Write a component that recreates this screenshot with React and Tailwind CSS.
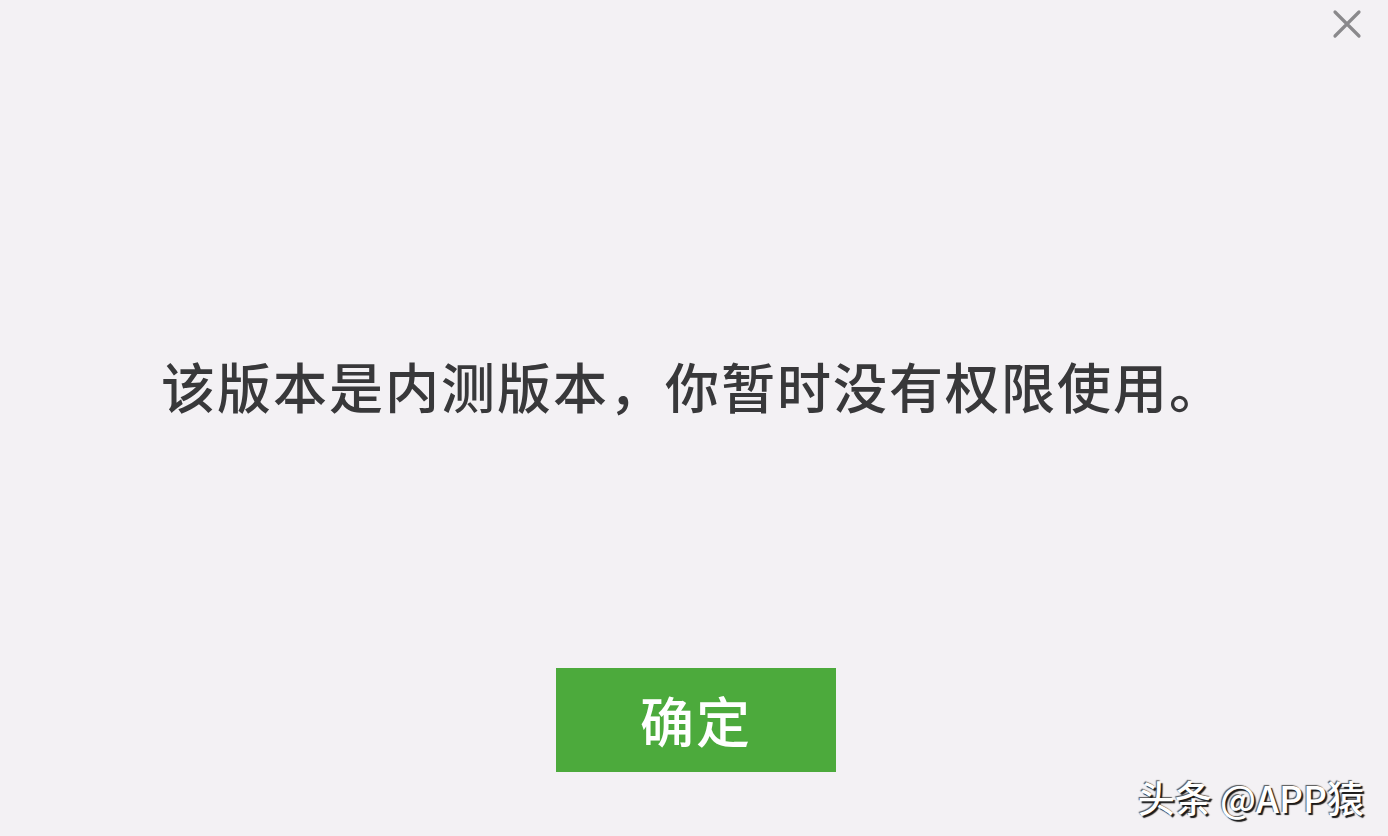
import React from 'react';

function CloseIcon() {
  return (
    <svg width="30" height="30" viewBox="0 0 30 30" className="block">
      <path d="M3 3 L27 27 M27 3 L3 27" stroke="#8a898c" strokeWidth="3.2" strokeLinecap="round" />
    </svg>
  );
}

export default function App() {
  return (
    <div
      className="w-[1388px] h-[836px] bg-[#f3f1f4] relative overflow-hidden flex flex-col items-center"
      style={{ fontFamily: '"Noto Sans CJK SC", "Liberation Sans", sans-serif' }}
    >
      <button className="absolute right-[26px] top-[9px] p-0 bg-transparent">
        <CloseIcon />
      </button>

      <p className="mt-[350px] h-[72px] leading-[72px] text-[54px] font-medium text-[#38383a] tracking-[2px] ml-[-2px]">
        该版本是内测版本，你暂时没有权限使用。
      </p>

      <button className="mt-[246px] ml-[4px] w-[280px] h-[104px] bg-[#4caa3c] text-white text-[54px] font-medium leading-none flex items-center justify-center tracking-[2px]">
        确定
      </button>

      <div
        className="absolute right-[24px] bottom-[20px] text-white text-[37px] font-medium leading-none"
        style={{ textShadow: '2px 2px 1px #1a1a1a, -1px -1px 1px #555' }}
      >
        头条 @APP猿
      </div>
    </div>
  );
}
